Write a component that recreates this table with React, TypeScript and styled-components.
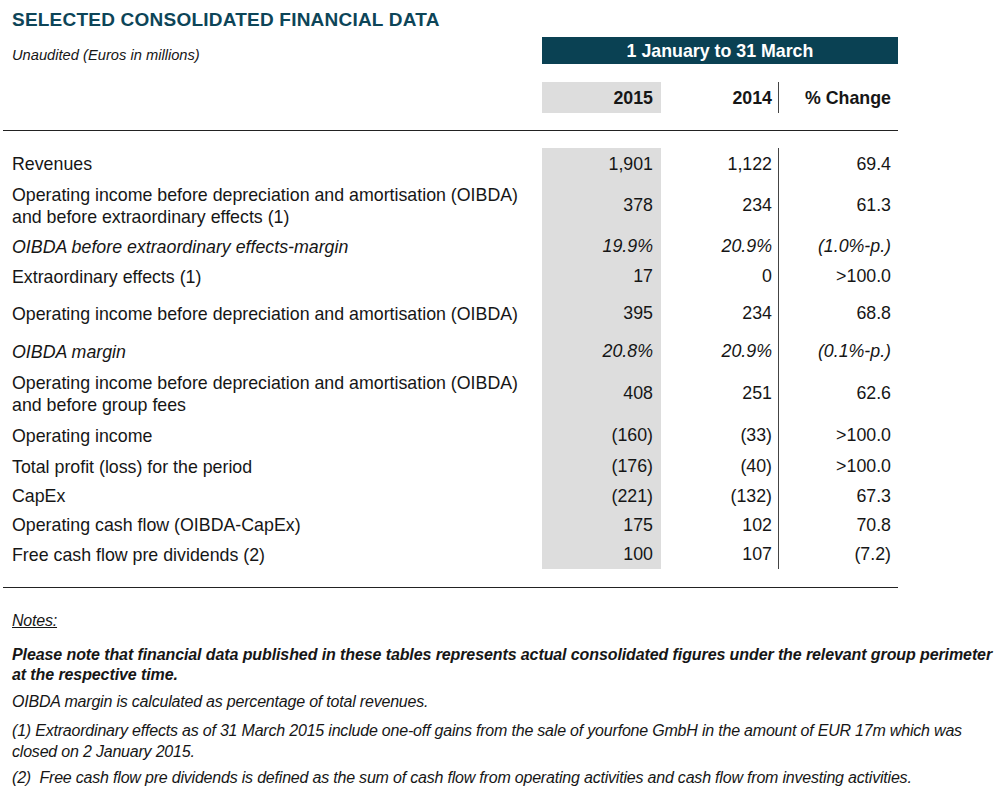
import React from "react";
import styled, { createGlobalStyle } from "styled-components";

const Global = createGlobalStyle`
  html, body { margin: 0; padding: 0; background: #fff; }
  body { font-family: "Liberation Sans", Arial, sans-serif; color: #161616; }
`;

const Page = styled.div`
  width: 1000px;
  height: 796px;
  padding: 8px 0 0 3px;
  box-sizing: border-box;
  overflow: hidden;
`;

const Title = styled.h1`
  margin: 0 0 0 9px;
  font-size: 19px;
  line-height: 23px;
  font-weight: 700;
  color: #0d4558;
  letter-spacing: 0.22px;
`;

const cols = "539px 119px 118px 119px";

const Grid = styled.div`
  display: grid;
  grid-template-columns: ${cols};
  width: 895px;
`;

const TopRow = styled(Grid)`
  margin-top: 6px;
  height: 27px;
`;

const Subtitle = styled.div`
  padding-left: 9px;
  font-style: italic;
  font-size: 14.7px;
  align-self: end;
  line-height: 18px;
`;

const Bar = styled.div`
  grid-column: 2 / 5;
  background: #0a4153;
  color: #fff;
  font-weight: 700;
  font-size: 17.8px;
  display: flex;
  align-items: center;
  justify-content: center;
  padding-top: 1px;
`;

const YearRow = styled(Grid)`
  margin-top: 18px;
  height: 31px;
`;

const Cell = styled.div<{ $grey?: boolean; $line?: boolean; $bold?: boolean; $italic?: boolean }>`
  display: flex;
  align-items: center;
  justify-content: flex-end;
  padding-right: 7px;
  padding-top: 1px;
  font-size: 17.8px;
  font-weight: ${(p) => (p.$bold ? 700 : 400)};
  font-style: ${(p) => (p.$italic ? "italic" : "normal")};
  background: ${(p) => (p.$grey ? "#dddddd" : "transparent")};
  border-right: ${(p) => (p.$line ? "1.5px solid #444" : "none")};
  ${(p) => (p.$line ? "padding-right: 6px;" : "")}
  ${(p) => (p.$grey ? "padding-right: 8px;" : "")}
`;

const Rule = styled.div<{ $top: number }>`
  width: 895px;
  border-top: 1.5px solid #222;
  margin-top: ${(p) => p.$top}px;
`;

const Body = styled.div`
  margin-top: 17px;
`;

const Row = styled(Grid)<{ $h: number }>`
  height: ${(p) => p.$h}px;
`;

const Label = styled.div<{ $italic?: boolean }>`
  display: flex;
  align-items: center;
  padding-left: 9px;
  padding-top: 1px;
  font-size: 17.8px;
  line-height: 22px;
  font-style: ${(p) => (p.$italic ? "italic" : "normal")};
`;

const Notes = styled.div`
  margin: 23px 0 0 9px;
  font-style: italic;
  font-size: 16px;
  line-height: 20.5px;
  letter-spacing: -0.2px;
  display: flex;
  flex-direction: column;
  gap: 6px;
`;

const NotesHead = styled.div`
  text-decoration: underline;
  margin-bottom: 7px;
`;

const Strong = styled.div`
  font-weight: 700;
  letter-spacing: -0.1px;
`;

const Note = styled.div<{ $after?: number }>`
  margin-bottom: ${(p) => p.$after ?? 0}px;
`;

type R = {
  label: React.ReactNode;
  v: [string, string, string];
  h: number;
  italic?: boolean;
};

const rows: R[] = [
  { label: "Revenues", v: ["1,901", "1,122", "69.4"], h: 31 },
  {
    label: (
      <>
        Operating income before depreciation and amortisation (OIBDA)
        <br />
        and before extraordinary effects (1)
      </>
    ),
    v: ["378", "234", "61.3"],
    h: 52,
  },
  { label: "OIBDA before extraordinary effects-margin", v: ["19.9%", "20.9%", "(1.0%-p.)"], h: 30, italic: true },
  { label: "Extraordinary effects (1)", v: ["17", "0", ">100.0"], h: 30 },
  { label: "Operating income before depreciation and amortisation (OIBDA)", v: ["395", "234", "68.8"], h: 44 },
  { label: "OIBDA margin", v: ["20.8%", "20.9%", "(0.1%-p.)"], h: 32, italic: true },
  {
    label: (
      <>
        Operating income before depreciation and amortisation (OIBDA)
        <br />
        and before group fees
      </>
    ),
    v: ["408", "251", "62.6"],
    h: 52,
  },
  { label: "Operating income", v: ["(160)", "(33)", ">100.0"], h: 32 },
  { label: "Total profit (loss) for the period", v: ["(176)", "(40)", ">100.0"], h: 30 },
  { label: "CapEx", v: ["(221)", "(132)", "67.3"], h: 29 },
  { label: "Operating cash flow (OIBDA-CapEx)", v: ["175", "102", "70.8"], h: 29 },
  { label: "Free cash flow pre dividends (2)", v: ["100", "107", "(7.2)"], h: 30 },
];

export default function App() {
  return (
    <Page>
      <Global />
      <Title>SELECTED CONSOLIDATED FINANCIAL DATA</Title>
      <TopRow>
        <Subtitle>Unaudited (Euros in millions)</Subtitle>
        <Bar>1 January to 31 March</Bar>
      </TopRow>
      <YearRow>
        <div />
        <Cell $grey $bold>2015</Cell>
        <Cell $line $bold>2014</Cell>
        <Cell $bold>% Change</Cell>
      </YearRow>
      <Rule $top={17} />
      <Body>
        {rows.map((r, i) => (
          <Row key={i} $h={r.h}>
            <Label $italic={r.italic}>
              <span>{r.label}</span>
            </Label>
            <Cell $grey $italic={r.italic}>{r.v[0]}</Cell>
            <Cell $line $italic={r.italic}>{r.v[1]}</Cell>
            <Cell $italic={r.italic}>{r.v[2]}</Cell>
          </Row>
        ))}
      </Body>
      <Rule $top={18} />
      <Notes>
        <NotesHead>Notes:</NotesHead>
        <Strong>
          Please note that financial data published in these tables represents actual consolidated figures under the relevant group perimeter
          <br />
          at the respective time.
        </Strong>
        <Note $after={3}>OIBDA margin is calculated as percentage of total revenues.</Note>
        <Note>
          (1) Extraordinary effects as of 31 March 2015 include one-off gains from the sale of yourfone GmbH in the amount of EUR 17m which was
          <br />
          closed on 2 January 2015.
        </Note>
        <Note>(2)&nbsp; Free cash flow pre dividends is defined as the sum of cash flow from operating activities and cash flow from investing activities.</Note>
      </Notes>
    </Page>
  );
}
